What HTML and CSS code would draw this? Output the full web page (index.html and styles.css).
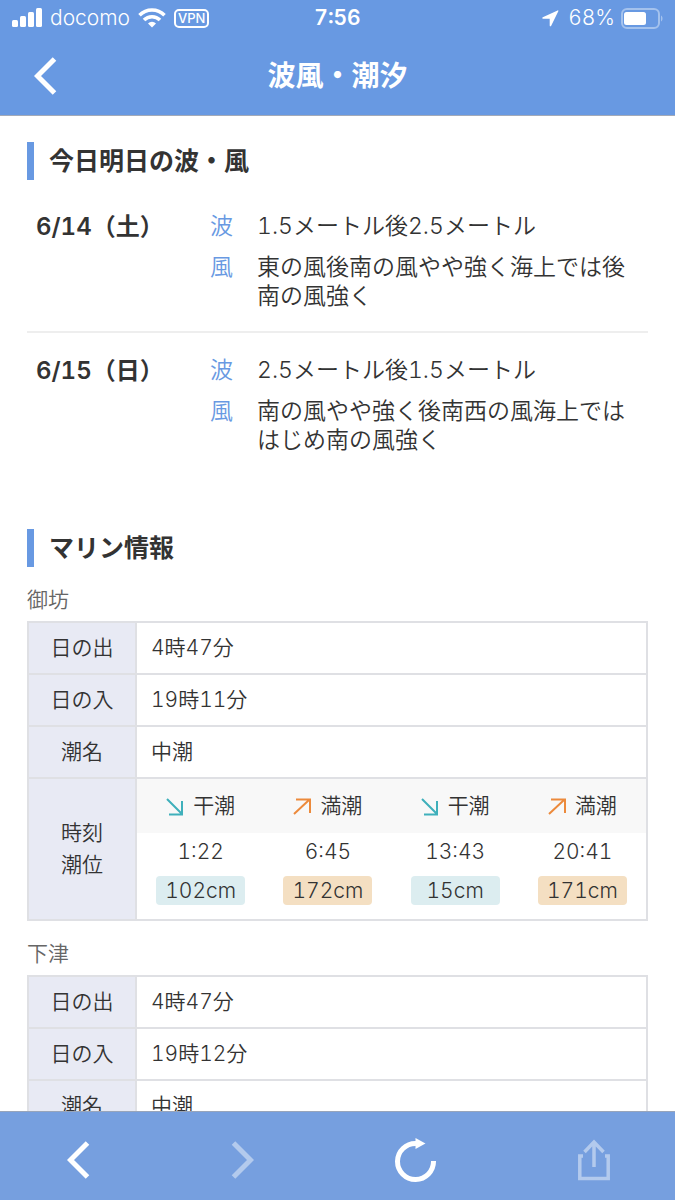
FILE: index.html
```
<!doctype html>
<html lang="ja">
  <head>
    <meta charset="UTF-8" />
    <meta name="viewport" content="width=device-width, initial-scale=1.0" />
    <title>波風・潮汐</title>
    <link rel="stylesheet" href="styles.css">
  </head>
  <body>
    <header class="header">
      <div class="status-bar">
        <div class="status-left">
          <svg class="signal" width="30" height="20" viewBox="0 0 30 20" fill="currentColor">
            <rect x="0" y="12" width="6" height="7" rx="1.5" />
            <rect x="8" y="8" width="6" height="11" rx="1.5" />
            <rect x="16" y="4" width="6" height="15" rx="1.5" />
            <rect x="24" y="0" width="6" height="19" rx="1.5" />
          </svg>
          <span>docomo</span>
          <svg class="wifi" width="28" height="20" viewBox="0 0 28 20" fill="none" stroke="currentColor" stroke-width="3.6">
            <path d="M1.500 7.200a17.600 17.600 0 0 1 25 0" />
            <path d="M6 12a11.300 11.300 0 0 1 16 0" />
            <path d="M14 19.500l-4-4a5.600 5.600 0 0 1 8 0z" fill="currentColor" stroke="none" />
          </svg>
          <span class="vpn">VPN</span>
        </div>
        <div class="clock">7:56</div>
        <div class="status-right">
          <svg width="17" height="17" viewBox="0 0 17 17" fill="currentColor">
            <path d="M15.600.400L.800 7.300c-1 .5-.7 1.500.3 1.500h6.600v6.600c0 1 1.100 1.300 1.500.3L16.300 1.300c.3-.7-.1-1.100-.7-.9z" />
          </svg>
          <span class="percent">68%</span>
          <svg width="42" height="21" viewBox="0 0 42 21">
            <rect x="1" y="1" width="37" height="19" rx="5" fill="none" stroke="#fff" stroke-opacity="0.4" stroke-width="2" />
            <rect x="3" y="4" width="22" height="13" rx="2.500" fill="#fff" />
            <path d="M40 7.500c2 .8 2 5.200 0 6z" fill="#fff" fill-opacity="0.4" />
          </svg>
        </div>
      </div>
      <div class="nav-bar">
        <button class="icon-button" type="button" aria-label="戻る">
          <svg width="23" height="38" viewBox="0 0 23 38" fill="none" stroke="currentColor" stroke-width="5">
            <path d="M20.500 2L3.500 19l17 17" />
          </svg>
        </button>
        <h1>波風・潮汐</h1>
      </div>
    </header>

    <main class="content">
      <section>
        <h2>今日明日の波・風</h2>
        <div class="day">
          <h3>6/14（土）</h3>
          <dl>
            <dt>波</dt>
            <dd>1.5メートル後2.5メートル</dd>
            <dt>風</dt>
            <dd>東の風後南の風やや強く海上では後南の風強く</dd>
          </dl>
        </div>
        <div class="day">
          <h3>6/15（日）</h3>
          <dl>
            <dt>波</dt>
            <dd>2.5メートル後1.5メートル</dd>
            <dt>風</dt>
            <dd>南の風やや強く後南西の風海上でははじめ南の風強く</dd>
          </dl>
        </div>
      </section>

      <section class="marine">
        <h2>マリン情報</h2>

        <table class="port">
          <caption>御坊</caption>
          <tr>
            <th scope="row">日の出</th>
            <td>4時47分</td>
          </tr>
          <tr>
            <th scope="row">日の入</th>
            <td>19時11分</td>
          </tr>
          <tr>
            <th scope="row">潮名</th>
            <td>中潮</td>
          </tr>
          <tr>
            <th scope="row">時刻<br />潮位</th>
            <td class="tide-cell">
              <table class="tides">
                <tr>
                  <th scope="col"><svg class="low" viewBox="0 0 18 18"><path d="M1 1l15 15M16 3v13.500H3" /></svg>干潮</th>
                  <th scope="col"><svg class="high" viewBox="0 0 18 18"><path d="M1 16L16 2M3 1.500h14V15" /></svg>満潮</th>
                  <th scope="col"><svg class="low" viewBox="0 0 18 18"><path d="M1 1l15 15M16 3v13.500H3" /></svg>干潮</th>
                  <th scope="col"><svg class="high" viewBox="0 0 18 18"><path d="M1 16L16 2M3 1.500h14V15" /></svg>満潮</th>
                </tr>
                <tr>
                  <td>1:22</td>
                  <td>6:45</td>
                  <td>13:43</td>
                  <td>20:41</td>
                </tr>
                <tr class="levels">
                  <td><span class="level">102cm</span></td>
                  <td><span class="level level-high">172cm</span></td>
                  <td><span class="level">15cm</span></td>
                  <td><span class="level level-high">171cm</span></td>
                </tr>
              </table>
            </td>
          </tr>
        </table>

        <table class="port">
          <caption>下津</caption>
          <tr>
            <th scope="row">日の出</th>
            <td>4時47分</td>
          </tr>
          <tr>
            <th scope="row">日の入</th>
            <td>19時12分</td>
          </tr>
          <tr>
            <th scope="row">潮名</th>
            <td>中潮</td>
          </tr>
        </table>
      </section>
    </main>

    <footer class="toolbar">
      <button class="icon-button" type="button" aria-label="前のページ">
        <svg width="23" height="38" viewBox="0 0 23 38" fill="none" stroke="currentColor" stroke-width="5">
          <path d="M20.500 2L3.500 19l17 17" />
        </svg>
      </button>
      <button class="icon-button" type="button" aria-label="次のページ" disabled>
        <svg width="23" height="38" viewBox="0 0 23 38" fill="none" stroke="currentColor" stroke-width="5">
          <path d="M2.500 2l17 17-17 17" />
        </svg>
      </button>
      <button class="icon-button" type="button" aria-label="再読み込み">
        <svg width="42" height="44" viewBox="0 0 42 44" fill="none" stroke="currentColor" stroke-width="5">
          <path d="M38.500 23A18 18 0 1 1 21 5.500" />
          <path d="M20.500 0l10 5.500-10 5.500z" fill="currentColor" stroke="none" />
        </svg>
      </button>
      <button class="icon-button" type="button" aria-label="共有" disabled>
        <svg width="32" height="42" viewBox="0 0 32 42" fill="none" stroke="currentColor" stroke-width="3.500">
          <path d="M5 17H1.800v22.500h28.400V17H27" />
          <path d="M16 28V3M6.500 13L16 3l9.500 10" />
        </svg>
      </button>
    </footer>
  </body>
</html>
```
FILE: styles.css
```
* {
  margin: 0;
  padding: 0;
  box-sizing: border-box;
}

body {
  display: flex;
  flex-direction: column;
  height: 100vh;
  font-family: Inter, "Noto Sans CJK JP", sans-serif;
  font-weight: 350;
  font-variant-numeric: tabular-nums;
  color: #333;
  background: #fff;
}

svg {
  flex-shrink: 0;
}

.header {
  flex-shrink: 0;
  color: #fff;
  background: #6899e2;
  border-bottom: 1px solid #a3aab8;
}

.status-bar {
  display: grid;
  grid-template-columns: 1fr auto 1fr;
  align-items: center;
  height: 36px;
  padding: 0 12px;
  font-size: 21px;
  line-height: 24px;
}

.status-left,
.status-right {
  display: flex;
  align-items: center;
}

.status-left {
  gap: 8px;
}

.status-right {
  justify-content: flex-end;
  gap: 6px;
}

.percent {
  margin-left: 3px;
}

.vpn {
  padding: 0 2px;
  border: 2px solid #fff;
  border-radius: 5px;
  font-size: 13px;
  font-weight: 500;
  line-height: 15px;
}

.clock {
  font-weight: 600;
}

.nav-bar {
  position: relative;
  display: flex;
  align-items: center;
  height: 79px;
  padding: 0 34px;
}

.nav-bar h1 {
  position: absolute;
  left: 80px;
  right: 80px;
  font-size: 28px;
  font-weight: 700;
  line-height: 40px;
  text-align: center;
}

.icon-button {
  display: flex;
  border: none;
  background: none;
  color: #fff;
  cursor: pointer;
}

.icon-button:disabled {
  color: rgba(255, 255, 255, 0.45);
  cursor: default;
}

.content {
  flex: 1;
  min-height: 0;
  overflow-y: auto;
  scrollbar-width: none;
  padding: 26px 27px;
}

h2 {
  padding-left: 15px;
  border-left: 7px solid #6899e2;
  font-size: 25px;
  font-weight: 700;
  line-height: 38px;
}

/* Waves and wind */
h2 + .day {
  margin-top: 9px;
}

.day {
  display: grid;
  grid-template-columns: 174px 1fr;
  padding: 23px 0 20px 9px;
  font-size: 23px;
  line-height: 29px;
}

.day + .day {
  border-top: 2px solid #eee;
}

.day h3 {
  font-size: 24px;
  font-weight: 600;
}

.day dl {
  display: grid;
  grid-template-columns: 47px 1fr;
  row-gap: 12px;
}

.day dt {
  color: #6899e2;
}

.day dd {
  padding-right: 8px;
}

/* Marine information */
.marine {
  margin-top: 54px;
}

.port {
  width: 100%;
  margin-top: 18px;
  border-collapse: collapse;
  font-size: 21px;
  line-height: 32px;
}

.port caption {
  padding-bottom: 6px;
  color: #666;
  line-height: 30px;
  text-align: left;
}

.port th,
.port td {
  height: 52px;
  border: 2px solid #dfe0e4;
  font-weight: 350;
}

.port th {
  width: 108px;
  background: #e8eaf4;
}

.port td {
  padding-left: 14px;
}

.port .tide-cell {
  padding: 0;
  vertical-align: top;
}

.port .tides {
  width: 100%;
  table-layout: fixed;
  border-collapse: collapse;
}

.port .tides th,
.port .tides td {
  width: auto;
  height: 38px;
  padding: 0;
  border: none;
  text-align: center;
}

.port .tides th {
  height: 54px;
  background: #f8f8f8;
}

.port .tides .levels td {
  height: 48px;
  padding-bottom: 10px;
}

.tides svg {
  width: 18px;
  height: 18px;
  margin-right: 9px;
  vertical-align: -3px;
  fill: none;
  stroke-width: 2;
}

.low {
  stroke: #3fb0bb;
}

.high {
  stroke: #ec8a3c;
}

.level {
  display: block;
  width: 89px;
  margin: 0 auto;
  border-radius: 4px;
  background: #dcedf0;
  line-height: 29px;
}

.level-high {
  background: #f4dfc2;
}

.toolbar {
  flex-shrink: 0;
  display: flex;
  align-items: center;
  justify-content: space-between;
  height: 89px;
  padding: 8px 65px 0 67px;
  background: #769fdf;
  border-top: 1px solid #98a5ba;
}
```
